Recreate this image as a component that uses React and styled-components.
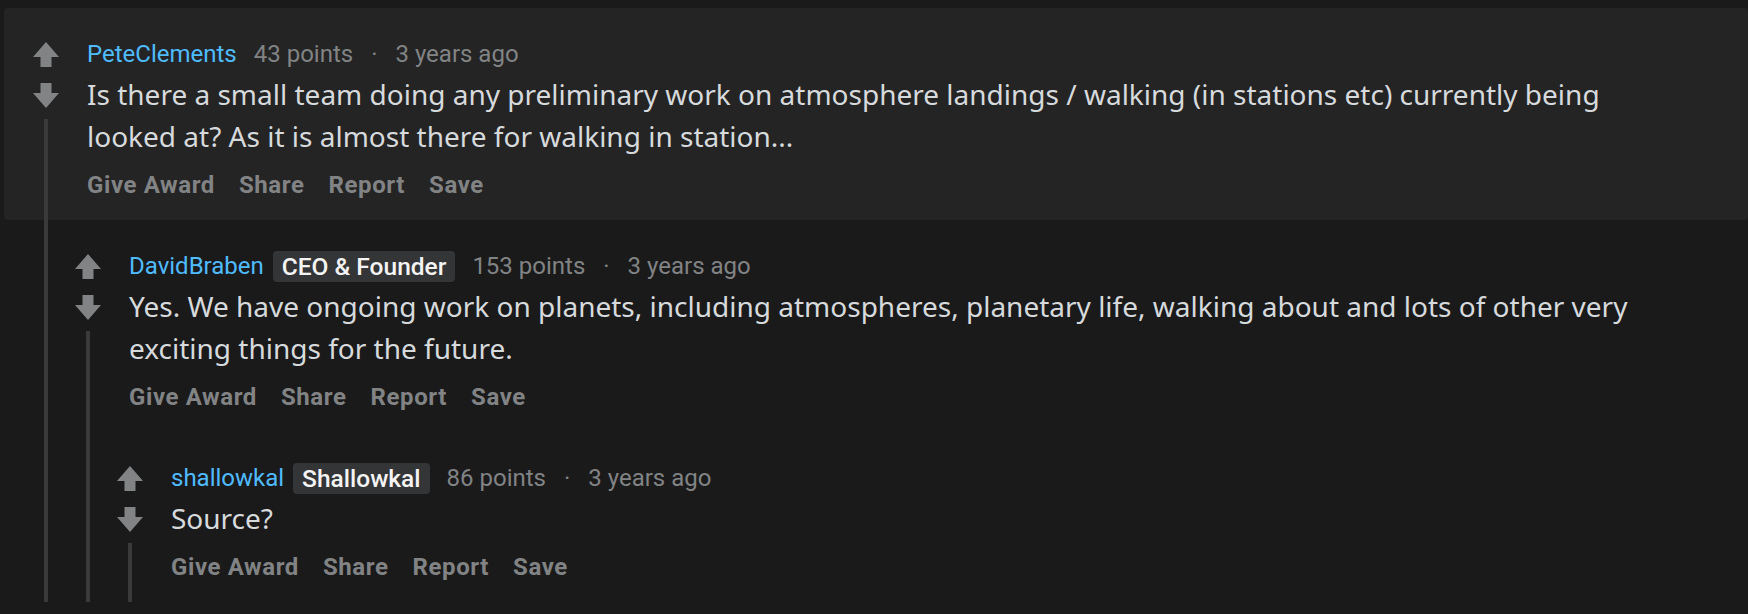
import React from 'react';
import styled, { createGlobalStyle } from 'styled-components';

const GlobalStyle = createGlobalStyle`
  html, body {
    margin: 0;
    padding: 0;
    background: #1a1a1b;
    overflow: hidden;
  }
  * {
    box-sizing: border-box;
  }
`;

const Page = styled.div`
  padding: 8px 0 0 6px;
  width: 1748px;
  min-height: 614px;
  background: #1a1a1b;
`;

const Thread = styled.div`
  display: flex;
  flex-direction: column;
`;

const Row = styled.div`
  display: flex;
  gap: 28px;
  padding-top: 30px;
  padding-left: ${({ $highlight }) => ($highlight ? '29px' : '27px')};
  margin-left: ${({ $highlight }) => ($highlight ? '-2px' : '0')};
  background: ${({ $highlight }) => ($highlight ? '#242424' : 'transparent')};
  border-radius: ${({ $highlight }) => ($highlight ? '4px' : '0')};
`;

const Rail = styled.div`
  width: 26px;
  flex: none;
  display: flex;
  flex-direction: column;
  align-items: center;
  padding-top: 4px;
`;

const VoteButton = styled.button`
  border: none;
  background: none;
  padding: 0;
  width: 26px;
  height: 25px;
  display: block;
  cursor: pointer;
  color: #818384;
  margin-bottom: ${({ $down }) => ($down ? '11px' : '16px')};

  svg {
    display: block;
  }
`;

const ThreadLine = styled.div`
  flex: 1;
  width: 4px;
  background: #3a3a3b;
`;

const Main = styled.div`
  flex: 1;
  min-width: 0;
  padding-right: 83px;
  padding-bottom: 19px;
`;

const Header = styled.div`
  display: flex;
  align-items: center;
  height: 32px;
  font-family: Roboto, 'Liberation Sans', sans-serif;
  font-size: 24px;
  line-height: 32px;
  white-space: nowrap;
`;

const Author = styled.a`
  color: #4fbcff;
  text-decoration: none;
`;

const Flair = styled.span`
  margin-left: 9px;
  height: 31px;
  line-height: 31px;
  padding: 0 9px;
  border-radius: 4px;
  background: #343536;
  color: #f4f4f4;
  font-size: 24.5px;
  font-weight: 500;
`;

const Meta = styled.span`
  margin-left: ${({ $first }) => ($first ? '17px' : '0')};
  color: #818384;
`;

const Dot = styled.span`
  padding: 0 18px;
  color: #818384;
`;

const Body = styled.p`
  margin: 3px 0 0;
  font-family: 'Noto Sans', 'Open Sans', sans-serif;
  font-size: 28px;
  line-height: 42px;
  color: #d7dadc;
`;

const Actions = styled.div`
  display: flex;
  gap: 24px;
  margin-top: 12px;
`;

const ActionButton = styled.button`
  border: none;
  background: none;
  padding: 0;
  font-family: Roboto, 'Liberation Sans', sans-serif;
  font-weight: 700;
  font-size: 24px;
  line-height: 32px;
  letter-spacing: 0.6px;
  color: #818384;
  cursor: pointer;
`;

const Replies = styled.div`
  margin-left: 38px;
  border-left: 4px solid #3a3a3b;
`;

function UpArrow() {
  return (
    <svg width='26' height='25' viewBox='0 0 26 25'>
      <path d='M13 0 L26 15 H18.5 V25 H7.5 V15 H0 Z' fill='currentColor' />
    </svg>
  );
}

function DownArrow() {
  return (
    <svg width='26' height='25' viewBox='0 0 26 25'>
      <path d='M13 25 L26 10 H18.5 V0 H7.5 V10 H0 Z' fill='currentColor' />
    </svg>
  );
}

const thread = {
  author: 'PeteClements',
  points: 43,
  time: '3 years ago',
  text: 'Is there a small team doing any preliminary work on atmosphere landings / walking (in stations etc) currently being looked at? As it is almost there for walking in station...',
  highlight: true,
  replies: [
    {
      author: 'DavidBraben',
      flair: 'CEO & Founder',
      points: 153,
      time: '3 years ago',
      text: 'Yes. We have ongoing work on planets, including atmospheres, planetary life, walking about and lots of other very exciting things for the future.',
      replies: [
        {
          author: 'shallowkal',
          flair: 'Shallowkal',
          points: 86,
          time: '3 years ago',
          text: 'Source?',
          replies: [],
        },
      ],
    },
  ],
};

function Comment({ comment }) {
  return (
    <Thread>
      <Row $highlight={comment.highlight}>
        <Rail>
          <VoteButton aria-label='upvote'>
            <UpArrow />
          </VoteButton>
          <VoteButton $down aria-label='downvote'>
            <DownArrow />
          </VoteButton>
          <ThreadLine />
        </Rail>
        <Main>
          <Header>
            <Author href='#'>{comment.author}</Author>
            {comment.flair && <Flair>{comment.flair}</Flair>}
            <Meta $first>{comment.points} points</Meta>
            <Dot>·</Dot>
            <Meta>{comment.time}</Meta>
          </Header>
          <Body>{comment.text}</Body>
          <Actions>
            <ActionButton>Give Award</ActionButton>
            <ActionButton>Share</ActionButton>
            <ActionButton>Report</ActionButton>
            <ActionButton>Save</ActionButton>
          </Actions>
        </Main>
      </Row>
      {comment.replies && comment.replies.length > 0 && (
        <Replies>
          {comment.replies.map((r) => (
            <Comment key={r.author} comment={r} />
          ))}
        </Replies>
      )}
    </Thread>
  );
}

export default function App() {
  return (
    <>
      <GlobalStyle />
      <Page>
        <Comment comment={thread} />
      </Page>
    </>
  );
}
